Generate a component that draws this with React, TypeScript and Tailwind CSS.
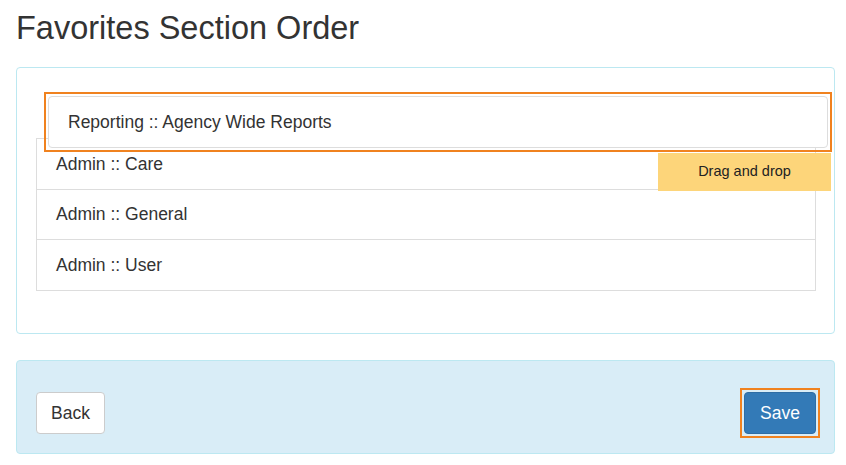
import React from "react";

export default function App() {
  const rows = ["Admin :: Care", "Admin :: General", "Admin :: User"];
  return (
    <div className="w-[846px] h-[465px] bg-white overflow-hidden font-['Liberation_Sans',Arial,sans-serif] text-[#333]">
      <h1 className="pl-4 pt-[11px] text-[32.5px] leading-[1.1] font-normal mb-[20px]">
        Favorites Section Order
      </h1>
      <div className="ml-4 w-[819px] border border-[#bce8f1] rounded-[4px] pt-[19px] pl-[19px] pr-[18px] pb-[42px]">
        <div className="relative h-[51px]">
          <div className="absolute left-[8px] top-[5px] z-10 border-2 border-[#f0821f] p-[2px]">
            <div className="w-[780px] h-[52px] bg-white border border-[#ddd] rounded-[4px] flex items-center px-[19px] text-[17.5px]">
              Reporting :: Agency Wide Reports
            </div>
          </div>
          <div className="absolute left-[622px] top-[66px] w-[173px] h-[38px] z-20 bg-[#fdd57a] flex items-center justify-center text-[14.5px] text-[#222]">
            Drag and drop
          </div>
        </div>
        <div className="w-[780px] border border-[#ddd]">
          {rows.map((r, i) => (
            <div
              key={r}
              className={`flex items-center px-[19px] text-[17.5px] ${i > 0 ? "border-t border-[#ddd]" : ""} ${i === rows.length - 1 ? "h-[51px]" : "h-[50px]"}`}
            >
              {r}
            </div>
          ))}
        </div>
      </div>
      <div className="ml-4 mt-[26px] w-[819px] bg-[#d9edf7] border border-[#bce8f1] rounded-[4px] pt-[27px] pb-[15px] pl-[19px] pr-[14px] flex justify-between items-center">
        <button className="w-[69px] h-[42px] bg-white border border-[#ccc] rounded-[4px] text-[17.5px] text-[#333]">
          Back
        </button>
        <div className="border-2 border-[#f0821f] p-[2px]">
          <button className="block w-[72px] h-[42px] bg-[#337ab7] border border-[#2e6da4] rounded-[4px] text-[17.5px] text-white">
            Save
          </button>
        </div>
      </div>
    </div>
  );
}
